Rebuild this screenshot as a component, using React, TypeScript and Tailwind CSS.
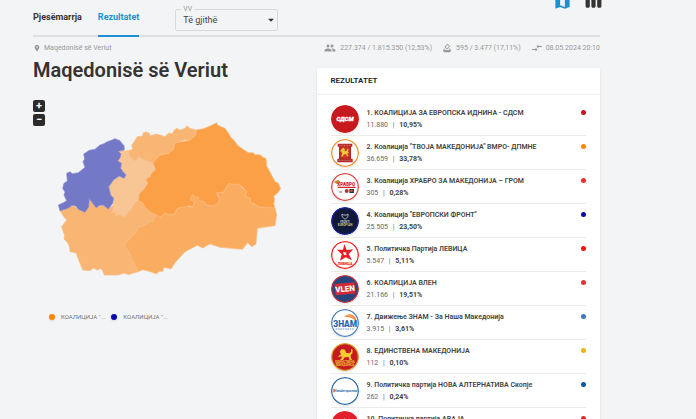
import React, { useState } from "react";
import {
  MdArrowDropDown,
  MdCompareArrows,
  MdHowToVote,
  MdMap,
  MdPeople,
  MdPlace,
  MdViewWeek
} from "react-icons/md";

type Party = {
  name: string;
  votes: string;
  share: string;
  color: string;
  logo: React.ReactNode;
};

const lion = "M-6 -6 l3 -2 3 2 -1 3 3 1 2 -4 3 1 -2 3 2 3 -3 1 2 5 -3 0 -1 -4 -4 1 -2 4 -3 -1 2 -4 -1 -4 -3 -1z";

const parties: Party[] = [
  {
    name: "1. КОАЛИЦИЈА ЗА ЕВРОПСКА ИДНИНА - СДСМ",
    votes: "11.880",
    share: "10,95%",
    color: "#c4161c",
    logo: (
      <>
        <circle cx="42" cy="42" r="42" fill="#c8191f" />
        <text x="42" y="49" fontSize="18" fontWeight="900" fontStyle="italic" textAnchor="middle" fill="#fff" stroke="#fff" strokeWidth="1">СДСМ</text>
      </>
    )
  },
  {
    name: "2. Коалиција \"ТВОЈА МАКЕДОНИЈА\" ВМРО- ДПМНЕ",
    votes: "36.659",
    share: "33,78%",
    color: "#ff8400",
    logo: (
      <>
        <circle cx="42" cy="42" r="40" fill="#fff" stroke="#f0902a" strokeWidth="4" />
        <path d="M20 14h44v9h-4v36h5v11H19V59h5V23h-4z" fill="#b5282c" />
        <path d="M28 22h28v30l-14 8-14-8z" fill="#cf3028" />
        <path d={lion} transform="translate(42 40) scale(1.7)" fill="#f6c53c" />
        <path d="M24 19h36M23 64h38" stroke="#e0a07c" strokeWidth="2" strokeDasharray="3 2" />
      </>
    )
  },
  {
    name: "3. Коалиција ХРАБРО ЗА МАКЕДОНИЈА – ГРОМ",
    votes: "305",
    share: "0,28%",
    color: "#ed2f2f",
    logo: (
      <>
        <circle cx="42" cy="42" r="40" fill="#fff" stroke="#e44143" strokeWidth="4" />
        <path d="M8 26l14-6 6 6-10 8z" fill="#c98a3a" />
        <text x="46" y="38" fontSize="14" fontWeight="900" textAnchor="middle" fill="#d3252c">ХРАБРО</text>
        <path d="M20 43h54" stroke="#d3252c" strokeWidth="4" />
        <path d="M25 53h10l-3 7h-7z" fill="#a9b1b5" />
        <circle cx="47" cy="54" r="6" fill="#a43a32" />
        <path d="M55 48h14v12H55z" fill="#2f3a48" />
        <path d="M58 51h7v5h-7z" fill="#d8523e" />
      </>
    )
  },
  {
    name: "4. Коалиција \"ЕВРОПСКИ ФРОНТ\"",
    votes: "25.505",
    share: "23,50%",
    color: "#0a0aa8",
    logo: (
      <>
        <circle cx="42" cy="42" r="40" fill="#101a38" stroke="#1c22a4" strokeWidth="4" />
        <path d="M33 21l5 3h8l5-3v8l-9 8-9-8z" fill="none" stroke="#a8b0bd" strokeWidth="3" />
        <text x="42" y="47" fontSize="8" fontWeight="700" textAnchor="middle" fill="#c3c9d2">FRONTI</text>
        <text x="42" y="56" fontSize="9" fontWeight="700" textAnchor="middle" fill="#d3c57e">EUROPIAN</text>
      </>
    )
  },
  {
    name: "5. Политичка Партија ЛЕВИЦА",
    votes: "5.547",
    share: "5,11%",
    color: "#fb0f0f",
    logo: (
      <>
        <circle cx="42" cy="42" r="40" fill="#fff" stroke="#f2201f" strokeWidth="4" />
        <path d="M40 9l7 18 20-2-14 14 10 19-19-9-17 10 5-19-14-14 18 0z" fill="#ee1c22" />
        <path d="M36 34l4-1 2 2 5-1-2 4 2 4-5-1-3 2-1-4z" fill="#fff" />
        <text x="42" y="72" fontSize="11" fontWeight="900" textAnchor="middle" fill="#ee1c22">ЛЕВИЦА</text>
      </>
    )
  },
  {
    name: "6. КОАЛИЦИЈА ВЛЕН",
    votes: "21.166",
    share: "19,51%",
    color: "#e0363a",
    logo: (
      <>
        <circle cx="42" cy="42" r="40" fill="#28467c" stroke="#c7353d" strokeWidth="4" />
        <g transform="rotate(-5 42 42)">
          <path d="M12 24h60v34H12z" fill="#d42a35" />
          <text x="42" y="50" fontSize="24" fontWeight="900" textAnchor="middle" fill="#fff">VLEN</text>
        </g>
      </>
    )
  },
  {
    name: "7. Движење ЗНАМ - За Наша Македонија",
    votes: "3.915",
    share: "3,61%",
    color: "#3a78c0",
    logo: (
      <>
        <circle cx="42" cy="42" r="40" fill="#fff" stroke="#4a7fc3" strokeWidth="4" />
        <path d="M40 23q18-16 34 3l2 14q-10-13-22-15-6-1-14-2z" fill="#f58235" />
        <path d="M43 21q17-5 28 9" stroke="#ffc08c" strokeWidth="2" fill="none" />
        <text x="42" y="53" fontSize="25" fontWeight="900" textAnchor="middle" fill="#2467b5">ЗНАМ</text>
        <path d="M14 60h56" stroke="#6893c9" strokeWidth="3" strokeDasharray="5 2" />
      </>
    )
  },
  {
    name: "8. ЕДИНСТВЕНА МАКЕДОНИЈА",
    votes: "112",
    share: "0,10%",
    color: "#e3b51d",
    logo: (
      <>
        <circle cx="42" cy="42" r="40" fill="#c51a20" stroke="#d9a02b" strokeWidth="4" />
        <path d="M26 26l6-8 10 2 3 9 9 2 6-4 0-9 5 2-1 12-5 3 1 11 4 4-8 1-3-9-12 1-5 8-9 0 5-5-1-7-8 4-1-3 8-6z" fill="#f9c933" />
        <text x="42" y="61" fontSize="9" fontWeight="700" textAnchor="middle" fill="#f4c23b">ЕДИНСТВЕНА</text>
        <text x="42" y="69" fontSize="8" fontWeight="700" textAnchor="middle" fill="#f4c23b">МАКЕДОНИЈА</text>
      </>
    )
  },
  {
    name: "9. Политичка партија НОВА АЛТЕРНАТИВА Скопје",
    votes: "262",
    share: "0,24%",
    color: "#0b58a4",
    logo: (
      <>
        <circle cx="42" cy="42" r="40" fill="#fff" stroke="#2e6ca8" strokeWidth="4" />
        <path d="M7 36h5v10H7z" fill="#e0703a" />
        <text x="45" y="44" fontSize="8" fontWeight="700" textAnchor="middle" fill="#2f6eaf">НоваАлтернатива</text>
      </>
    )
  },
  {
    name: "10. Политичка партија АВАЈА",
    votes: "98",
    share: "0,09%",
    color: "#e8202a",
    logo: (
      <>
        <circle cx="42" cy="42" r="42" fill="#e21f2c" />
        <path d="M35 29l5-7 6 6 5 20-14-2z" fill="#fff" />
      </>
    )
  }
];

const units = [
  {
    id: "south-west",
    fill: "#f8b573",
    d: "M30 302L45 298 66 286 85 298 105 307 116 290 118 266 138 293 160 285 175 298 191 285 250 275 264 272 278 278 284 290 300 305 318 315 316 325 310 334 298 336 285 345 265 352 258 368 240 385 226 400 225 412 240 430 245 447 258 470 265 485 250 489 235 494 222 489 205 495 163 495 158 482 152 476 143 480 130 474 120 482 98 480 90 460 78 428 60 425 59 412 53 398 42 387 44 376 39 364 35 350 50 330 40 318z"
  },
  {
    id: "south-east",
    fill: "#faad60",
    d: "M318 315L330 322 345 310 360 315 375 310 380 298 390 292 412 289 428 292 433 275 420 270 427 255 448 265 470 285 490 288 508 265 500 248 520 247 537 220 565 222 590 245 587 260 602 265 600 275 625 290 650 293 675 293 680 315 675 347 622 355 618 402 605 410 593 398 577 418 510 412 480 402 458 414 442 406 405 425 375 458 363 477 342 472 338 485 330 483 318 492 302 485 290 482 277 479 265 485 258 470 245 447 240 430 225 412 226 400 240 385 258 368 265 352 285 345 298 336 310 334z"
  },
  {
    id: "north-east",
    fill: "#fca048",
    d: "M438 60L460 56 480 48 500 38 502 45 525 55 535 69 545 85 553 92 562 105 578 117 595 128 610 128 615 134 630 134 639 142 648 145 650 168 662 190 675 215 685 220 692 236 683 249 671 259 674 270 671 280 675 293 650 293 625 290 612 281 600 275 602 265 587 260 590 245 577 231 565 222 550 224 537 220 520 247 500 248 503 258 508 265 504 280 490 288 470 285 458 273 448 272 444 260 436 268 434 258 427 255 420 270 430 272 433 275 428 292 418 287 406 291 390 292 380 298 375 310 360 315 345 310 330 322 318 315 300 305 284 290 278 278 264 272 268 250 280 239 292 220 287 207 300 200 305 188 316 180 308 158 330 135 355 130 370 118 375 98 395 95 420 90 437 75z"
  },
  {
    id: "north",
    fill: "#f8b573",
    d: "M235 122L248 118 245 105 252 96 262 80 278 78 280 68 288 66 298 70 300 78 318 72 330 75 345 80 355 70 368 70 372 61 380 55 390 60 405 55 410 47 420 55 438 60 437 75 431 82 420 90 405 89 390 95 375 98 370 118 355 130 330 135 320 147 308 158 285 150 265 140 258 151 250 152 240 140z"
  },
  {
    id: "center",
    fill: "#f8c595",
    d: "M205 124L235 122 240 140 250 152 258 151 265 140 285 150 308 158 310 172 316 180 305 188 300 200 287 207 292 220 280 239 268 250 264 272 250 285 244 300 234 306 232 315 222 322 208 314 196 317 197 306 184 310 187 300 191 285 191 265 182 255 176 230 190 210 208 198 222 205 228 195 212 175 214 160 203 152 213 132z"
  },
  {
    id: "north-west",
    fill: "#7479c7",
    d: "M25 285L40 278 50 272 42 255 45 246 38 235 42 220 52 213 50 190 60 185 67 191 85 188 95 180 105 172 99 155 104 147 101 132 118 121 135 118 150 105 160 102 172 95 184 91 195 86 210 92 214 98 222 107 223 120 205 124 213 132 210 144 203 152 214 160 212 175 219 185 228 195 222 205 208 198 190 210 185 218 176 230 182 255 191 265 188 280 175 298 160 285 150 286 138 293 118 266 116 290 105 307 85 298 77 288 66 286 55 294 45 298 30 302z"
  }
];

const legend = [
  { label: "КОАЛИЦИЈА \"...", color: "#ff8400" },
  { label: "КОАЛИЦИЈА \"...", color: "#0a0aa8" }
];

function Header() {
  const [tab, setTab] = useState("Rezultatet");

  return (
    <header className="flex justify-between h-[37px] border-b-2 border-[#dfe0e2]">
      <div className="flex">
        <nav className="flex gap-4">
          {["Pjesëmarrja", "Rezultatet"].map((label) => (
            <button
              key={label}
              type="button"
              onClick={() => setTab(label)}
              className={`h-[37px] border-b-2 text-[9px] font-bold cursor-pointer ${
                tab === label ? "border-[#1c90d3] text-[#1c90d3]" : "border-transparent text-[#333]"
              }`}
            >
              {label}
            </button>
          ))}
        </nav>
        <div className="relative ml-9 mt-[9px] h-[22px] w-[103px]">
          <label htmlFor="unit" className="absolute left-[6px] -top-1 px-0.5 bg-[#f3f4f6] text-[7px] leading-[8px] text-[#999]">
            VV
          </label>
          <select
            id="unit"
            className="block w-full h-full appearance-none rounded-xs border border-[#d9dadc] pl-[7px] pt-0.5 text-[9px] text-[#444]"
          >
            <option>Të gjithë</option>
          </select>
          <MdArrowDropDown size={14} className="absolute right-0 top-1 text-[#333] pointer-events-none" />
        </div>
      </div>
      <div className="flex items-start gap-3 -mt-2 -mr-[3px]">
        <button type="button" aria-label="Map" className="text-[#1c90d3] cursor-pointer">
          <MdMap size={19} />
        </button>
        <button type="button" aria-label="Table" className="text-[#333] cursor-pointer">
          <MdViewWeek size={19} />
        </button>
      </div>
    </header>
  );
}

function StatusBar() {
  return (
    <div className="flex justify-between pt-[5px] text-[7px] leading-[11px] text-[#999]">
      <a href="#" className="flex items-center gap-[3px]">
        <MdPlace size={8} />
        Maqedonisë së Veriut
      </a>
      <div className="flex items-center gap-[10px]">
        <span className="flex items-center gap-1">
          <MdPeople size={12} />
          227.374 / 1.815.350 (12,53%)
        </span>
        <span className="flex items-center gap-1">
          <MdHowToVote size={10} />
          595 / 3.477 (17,11%)
        </span>
        <span className="flex items-center gap-[3px]">
          <MdCompareArrows size={12} />
          08.05.2024 20:10
        </span>
      </div>
    </div>
  );
}

function ResultMap() {
  return (
    <section>
      <h1 className="text-xl leading-[22px] font-semibold text-[#333]">Maqedonisë së Veriut</h1>
      <div className="flex items-start gap-[5px] mt-[19px]">
        <div className="flex flex-col gap-0.5 w-3">
          {["+", "−"].map((sign) => (
            <button key={sign} type="button" className="size-3 rounded-xs bg-[#2b2b2b] text-[11px] leading-3 font-bold text-white cursor-pointer">
              {sign}
            </button>
          ))}
        </div>
        <svg viewBox="0 0 702 510" className="w-[234px] mt-[10px]" role="img" aria-label="Maqedonisë së Veriut">
          {units.map((unit) => (
            <path key={unit.id} d={unit.d} fill={unit.fill} stroke={unit.id === "north-west" ? "#898dd0" : "#f9bd82"} strokeWidth="2" strokeLinejoin="round" />
          ))}
        </svg>
      </div>
      <ul className="flex gap-[6px] mt-8 ml-4 text-[6px] leading-[10px] text-[#777]">
        {legend.map((item) => (
          <li key={item.color} className="flex items-center gap-[6px]">
            <span className="size-[6px] rounded-full shadow" style={{ background: item.color }} />
            {item.label}
          </li>
        ))}
      </ul>
    </section>
  );
}

function PartyRow({ party }: { party: Party }) {
  return (
    <li className="flex items-center h-[34px] border-b border-[#ebebeb]">
      <svg viewBox="0 0 84 84" className="size-7 shrink-0 rounded-full shadow" aria-hidden="true">
        {party.logo}
      </svg>
      <div className="flex-1 ml-2 text-[7px] leading-3 text-[#444]">
        <div className="flex items-center justify-between font-semibold">
          <span className="whitespace-nowrap">{party.name}</span>
          <span className="size-[5px] rounded-full" style={{ background: party.color }} />
        </div>
        <p className="text-[#666]">
          {party.votes} <span className="mx-[3px]">|</span> <b className="text-[#444]">{party.share}</b>
        </p>
      </div>
    </li>
  );
}

export default function App() {
  return (
    <div className="h-screen overflow-hidden bg-[#f3f4f6] pl-[33px] pr-24 font-['Roboto',sans-serif]">
      <Header />
      <StatusBar />
      <main className="grid grid-cols-2 mt-[5px]">
        <ResultMap />
        <section className="mt-[9px] bg-white rounded-xs shadow">
          <h2 className="h-[27px] px-[14px] border-b border-[#eee] text-[8px] leading-[26px] font-semibold text-[#222]">REZULTATET</h2>
          <ul className="px-[14px] pt-[7px]">
            {parties.map((party) => (
              <PartyRow key={party.name} party={party} />
            ))}
          </ul>
        </section>
      </main>
    </div>
  );
}
